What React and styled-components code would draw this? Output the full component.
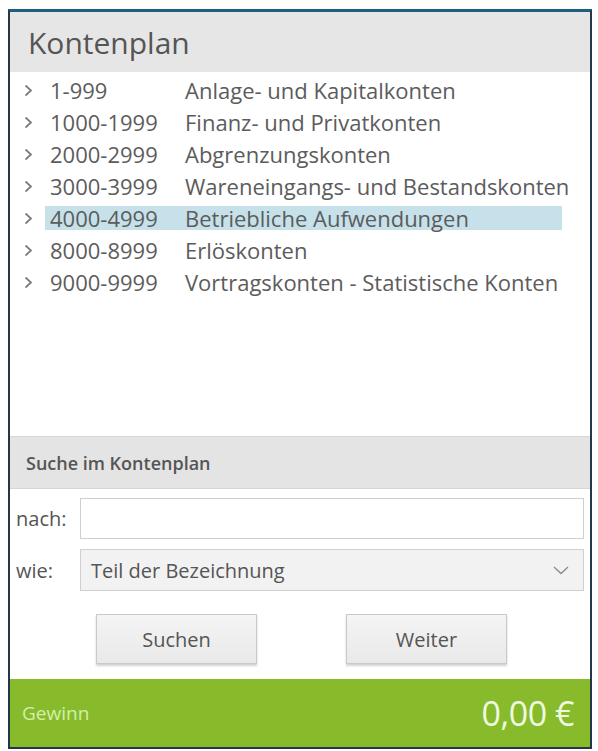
import styled, { createGlobalStyle } from "styled-components";

const GlobalStyle = createGlobalStyle`
  html, body {
    margin: 0;
    padding: 0;
    background: #ffffff;
  }
  body {
    font-family: "Open Sans", "Noto Sans", sans-serif;
  }
`;

const Page = styled.div`
  width: 598px;
  height: 751px;
  padding: 9px 6px 2px 8px;
  box-sizing: border-box;
`;

const Frame = styled.div`
  height: 100%;
  display: flex;
  flex-direction: column;
  border: 2px solid #22384a;
  border-top: 3px solid #1d5f7c;
  box-sizing: border-box;
  background: #ffffff;
`;

const TitleBar = styled.div`
  height: 60px;
  background: #e6e6e6;
  display: flex;
  align-items: center;
  padding-left: 18px;
  font-size: 30px;
  color: #555555;
`;

const Tree = styled.ul`
  flex: 1;
  list-style: none;
  margin: 0;
  padding: 6px 0 0 0;
  display: flex;
  flex-direction: column;
  gap: 8px;
`;

const Row = styled.li`
  display: flex;
  align-items: center;
  height: 24px;
  font-size: 22px;
  color: #5c5c5c;
`;

const Arrow = styled.span`
  width: 33px;
  display: flex;
  justify-content: center;
  padding-left: 2px;
`;

const RowBody = styled.div`
  display: flex;
  align-items: center;
  height: 100%;
  width: 517px;
  padding-left: 5px;
  box-sizing: border-box;
  background: ${(p) => (p.$selected ? "#c6e1ea" : "transparent")};
`;

const Range = styled.span`
  width: 135px;
  flex-shrink: 0;
`;

const Label = styled.span`
  white-space: nowrap;
`;

const SearchHeader = styled.div`
  height: 53px;
  background: #e4e4e4;
  border-top: 1px solid #d6d6d6;
  border-bottom: 1px solid #d6d6d6;
  display: flex;
  align-items: center;
  padding-left: 16px;
  font-size: 18px;
  font-weight: 600;
  color: #555555;
  box-sizing: border-box;
`;

const Form = styled.div`
  display: flex;
  flex-direction: column;
  gap: 10px;
  padding: 9px 6px 0 6px;
`;

const FieldRow = styled.div`
  display: flex;
  align-items: center;
`;

const FieldLabel = styled.span`
  width: 64px;
  font-size: 20px;
  color: #555555;
`;

const TextInput = styled.div`
  flex: 1;
  height: 41px;
  border: 1px solid #cfcfcf;
  background: #ffffff;
  box-sizing: border-box;
`;

const Select = styled.div`
  flex: 1;
  height: 42px;
  border: 1px solid #cfcfcf;
  background: #f2f2f2;
  box-sizing: border-box;
  display: flex;
  align-items: center;
  justify-content: space-between;
  padding: 0 14px 0 10px;
  font-size: 20px;
  color: #555555;
`;

const Buttons = styled.div`
  display: flex;
  gap: 89px;
  padding: 23px 0 15px 86px;
`;

const Button = styled.div`
  width: 161px;
  height: 50px;
  box-sizing: border-box;
  border: 1px solid #c9c9c9;
  background: linear-gradient(#f4f4f4, #e9e9e9);
  box-shadow: 0 2px 2px rgba(0, 0, 0, 0.18);
  display: flex;
  align-items: center;
  justify-content: center;
  font-size: 20px;
  color: #555555;
`;

const Footer = styled.div`
  height: 68px;
  background: #87bb2c;
  display: flex;
  align-items: center;
  justify-content: space-between;
  padding: 0 16px 0 12px;
`;

const FooterLabel = styled.span`
  font-size: 19px;
  color: #d3f0a6;
`;

const Amount = styled.span`
  font-size: 34px;
  color: #eef9df;
  letter-spacing: -0.5px;
`;

const rows = [
  ["1-999", "Anlage- und Kapitalkonten"],
  ["1000-1999", "Finanz- und Privatkonten"],
  ["2000-2999", "Abgrenzungskonten"],
  ["3000-3999", "Wareneingangs- und Bestandskonten"],
  ["4000-4999", "Betriebliche Aufwendungen"],
  ["8000-8999", "Erlöskonten"],
  ["9000-9999", "Vortragskonten - Statistische Konten"],
];

function Chevron() {
  return (
    <svg width="9" height="13" viewBox="0 0 9 13">
      <path d="M1.5 1.5 L7 6.5 L1.5 11.5" fill="none" stroke="#7a7a7a" strokeWidth="1.7" />
    </svg>
  );
}

function DownChevron() {
  return (
    <svg width="16" height="9" viewBox="0 0 16 9">
      <path d="M1 1 L8 7.5 L15 1" fill="none" stroke="#8a8a8a" strokeWidth="1.3" />
    </svg>
  );
}

export default function App() {
  return (
    <Page>
      <GlobalStyle />
      <Frame>
        <TitleBar>Kontenplan</TitleBar>
        <Tree>
          {rows.map(([range, label], i) => (
            <Row key={range}>
              <Arrow>
                <Chevron />
              </Arrow>
              <RowBody $selected={i === 4}>
                <Range>{range}</Range>
                <Label>{label}</Label>
              </RowBody>
            </Row>
          ))}
        </Tree>
        <SearchHeader>Suche im Kontenplan</SearchHeader>
        <Form>
          <FieldRow>
            <FieldLabel>nach:</FieldLabel>
            <TextInput />
          </FieldRow>
          <FieldRow>
            <FieldLabel>wie:</FieldLabel>
            <Select>
              <span>Teil der Bezeichnung</span>
              <DownChevron />
            </Select>
          </FieldRow>
        </Form>
        <Buttons>
          <Button>Suchen</Button>
          <Button>Weiter</Button>
        </Buttons>
        <Footer>
          <FooterLabel>Gewinn</FooterLabel>
          <Amount>0,00 €</Amount>
        </Footer>
      </Frame>
    </Page>
  );
}
